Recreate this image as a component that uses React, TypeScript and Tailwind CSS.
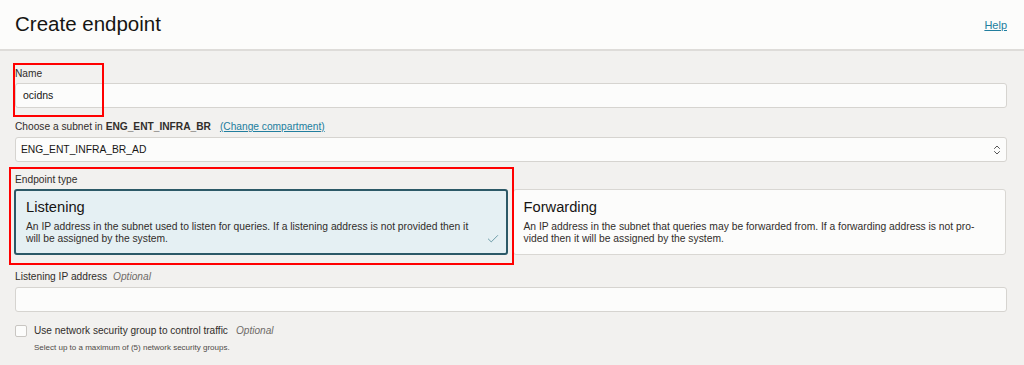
import { Check, ChevronsUpDown } from 'lucide-react';

const font = { fontFamily: '"Liberation Sans", Arial, sans-serif' };

type CardProps = {
  title: string;
  text: string;
  selected?: boolean;
};

function TypeCard({ title, text, selected = false }: CardProps) {
  return (
    <div
      className={`relative min-w-0 rounded-[3px] h-[66px] ${
        selected
          ? 'border-2 border-[#2c5967] bg-[#e5f0f3] pl-[10px] pt-[7px] pr-[30px]'
          : 'border border-[#d9d7d3] bg-[#fcfcfb] pl-[10px] pt-[8px] pr-[20px]'
      }`}
    >
      <div className="text-[14.7px] leading-[18px] text-[#161513]">{title}</div>
      <p className="mt-[5px] text-[10.3px] leading-[12px] text-[#312d2a]">{text}</p>
      {selected && <Check size={14} strokeWidth={1.5} className="absolute right-[6px] bottom-[7px] text-[#5a8f9c]" />}
    </div>
  );
}

export default function App() {
  return (
    <div className="relative w-[1024px] h-[365px] bg-[#f2f1ef] overflow-hidden" style={font}>
      {/* Header */}
      <div className="h-[51px] bg-[#fcfcfb] border-b-2 border-[#dedcd9] flex items-start justify-between pl-[15px] pr-[17px]">
        <h1 className="mt-[12px] text-[20.5px] leading-[24px] text-[#161513]">Create endpoint</h1>
        <a className="mt-[17px] text-[11px] text-[#227e9e] underline">Help</a>
      </div>

      <div className="pl-[15px] pr-[17px]">
        {/* Name */}
        <label className="block mt-[17px] text-[10.2px] leading-[12px] text-[#312d2a]">Name</label>
        <div className="mt-[3px] h-[25px] rounded-[3px] border border-[#d6d4d0] bg-[#fcfcfb] flex items-center pl-[7px] text-[10.5px] text-[#161513]">
          ocidns
        </div>

        {/* Subnet */}
        <div className="mt-[13px] text-[10.2px] leading-[12px] text-[#312d2a]">
          Choose a subnet in <span className="font-bold">ENG_ENT_INFRA_BR</span>
          <span className="ml-[9px] text-[#227e9e] underline">(Change compartment)</span>
        </div>
        <div className="mt-[4px] h-[25px] rounded-[3px] border border-[#d6d4d0] bg-[#fcfcfb] flex items-center justify-between pl-[5px] pr-[3px] text-[10.3px] text-[#161513]">
          <span>ENG_ENT_INFRA_BR_AD</span>
          <ChevronsUpDown size={12} strokeWidth={2} className="text-[#555]" />
        </div>

        {/* Endpoint type */}
        <div className="mt-[12px] text-[10.2px] leading-[12px] text-[#312d2a]">Endpoint type</div>
        <div className="mt-[3px] grid grid-cols-2 gap-[5px] mr-[1px] -ml-[1px]">
          <TypeCard
            selected
            title="Listening"
            text="An IP address in the subnet used to listen for queries. If a listening address is not provided then it will be assigned by the system."
          />
          <TypeCard
            title="Forwarding"
            text="An IP address in the subnet that queries may be forwarded from. If a forwarding address is not pro-vided then it will be assigned by the system."
          />
        </div>

        {/* Listening IP */}
        <div className="mt-[16px] text-[10.2px] leading-[12px] text-[#312d2a]">
          Listening IP address <span className="ml-[3px] italic text-[#6f6b67]">Optional</span>
        </div>
        <div className="mt-[4px] h-[25px] rounded-[3px] border border-[#d6d4d0] bg-[#fcfcfb]" />

        {/* NSG */}
        <div className="mt-[11px] flex items-center">
          <div className="w-[12px] h-[12px] rounded-[2px] border border-[#c9c6c2] bg-[#fcfcfb]" />
          <span className="ml-[7px] text-[10.1px] text-[#312d2a]">Use network security group to control traffic</span>
          <span className="ml-[8px] text-[10.1px] italic text-[#6f6b67]">Optional</span>
        </div>
        <div className="mt-[4px] ml-[19px] text-[8px] text-[#4f4b47]">Select up to a maximum of (5) network security groups.</div>
      </div>

      {/* Annotation boxes */}
      <div className="absolute left-[13px] top-[63px] w-[91px] h-[54px] border-2 border-[#ff0000]" />
      <div className="absolute left-[9px] top-[167px] w-[505px] h-[98px] border-2 border-[#ff0000]" />
    </div>
  );
}
